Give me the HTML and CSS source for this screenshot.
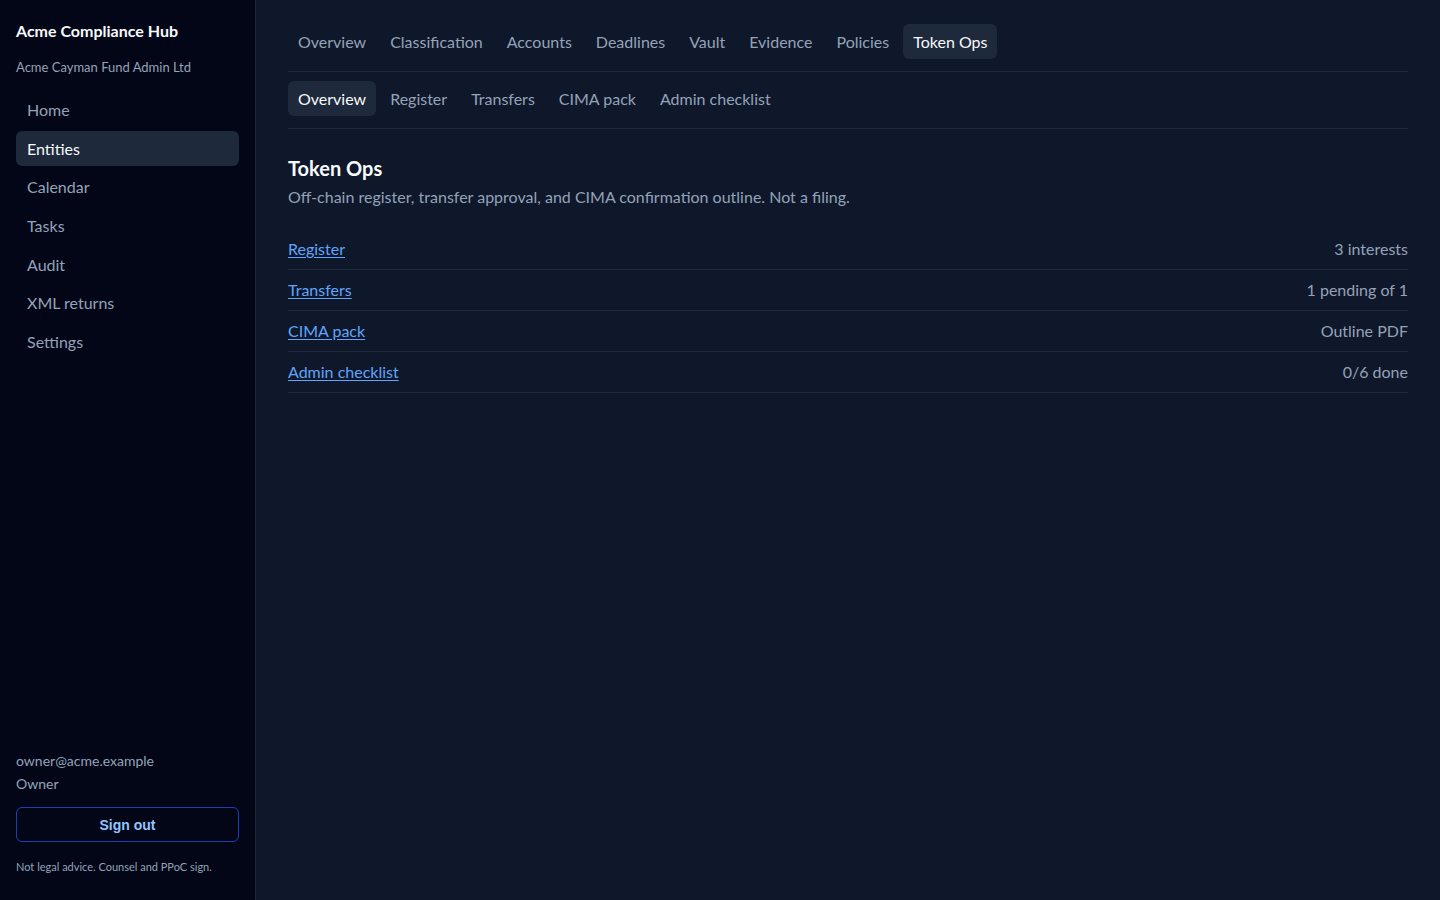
FILE: index.html
```html
<!DOCTYPE html>
<html lang="en">
<head>
<meta charset="utf-8">
<title>Token Ops · Acme Compliance Hub</title>
<link rel="stylesheet" href="styles.css">
</head>
<body>
<div class="app">
  <aside class="sidebar">
    <div class="brand">
      <div class="brand-title">Acme Compliance Hub</div>
      <div class="brand-org">Acme Cayman Fund Admin Ltd</div>
    </div>
    <nav class="side-nav">
      <a class="side-link" href="#">Home</a>
      <a class="side-link active" href="#">Entities</a>
      <a class="side-link" href="#">Calendar</a>
      <a class="side-link" href="#">Tasks</a>
      <a class="side-link" href="#">Audit</a>
      <a class="side-link" href="#">XML returns</a>
      <a class="side-link" href="#">Settings</a>
    </nav>
    <div class="side-footer">
      <div class="user-email">owner@acme.example</div>
      <div class="user-role">Owner</div>
      <button class="signout" type="button">Sign out</button>
      <div class="disclaimer">Not legal advice. Counsel and PPoC sign.</div>
    </div>
  </aside>
  <main class="main">
    <nav class="tabs">
      <a class="tab" href="#">Overview</a>
      <a class="tab" href="#">Classification</a>
      <a class="tab" href="#">Accounts</a>
      <a class="tab" href="#">Deadlines</a>
      <a class="tab" href="#">Vault</a>
      <a class="tab" href="#">Evidence</a>
      <a class="tab" href="#">Policies</a>
      <a class="tab active" href="#">Token Ops</a>
    </nav>
    <nav class="tabs sub">
      <a class="tab active" href="#">Overview</a>
      <a class="tab" href="#">Register</a>
      <a class="tab" href="#">Transfers</a>
      <a class="tab" href="#">CIMA pack</a>
      <a class="tab" href="#">Admin checklist</a>
    </nav>
    <section class="content">
      <h1 class="page-title">Token Ops</h1>
      <p class="page-desc">Off-chain register, transfer approval, and CIMA confirmation outline. Not a filing.</p>
      <ul class="summary">
        <li class="row"><a href="#">Register</a><span class="meta">3 interests</span></li>
        <li class="row"><a href="#">Transfers</a><span class="meta">1 pending of 1</span></li>
        <li class="row"><a href="#">CIMA pack</a><span class="meta">Outline PDF</span></li>
        <li class="row"><a href="#">Admin checklist</a><span class="meta">0/6 done</span></li>
      </ul>
    </section>
  </main>
</div>
</body>
</html>
```
FILE: styles.css
```css
* { box-sizing: border-box; }
html, body { margin: 0; padding: 0; height: 100%; }
body {
  background: #0f172a;
  color: #e2e8f0;
  font-family: Lato, "Noto Sans", "Liberation Sans", sans-serif;
  font-size: 16px;
}
a { text-decoration: none; color: inherit; }

.app { display: flex; min-height: 100vh; }

.sidebar {
  width: 256px;
  flex: 0 0 256px;
  background: #020617;
  border-right: 1px solid #1e293b;
  padding: 20px 16px 25px;
  display: flex;
  flex-direction: column;
  height: 100vh;
}
.brand-title {
  font-weight: 700;
  font-size: 16px;
  line-height: 22px;
  color: #f8fafc;
}
.brand-org {
  margin-top: 16px;
  font-size: 13px;
  line-height: 18px;
  color: #94a3b8;
}
.side-nav {
  margin-top: 16px;
  display: flex;
  flex-direction: column;
  gap: 3.7px;
}
.side-link {
  display: block;
  padding: 6px 11px;
  line-height: 23px;
  border-radius: 6px;
  color: #94a3b8;
  font-size: 16px;
}
.side-link.active { background: #1e293b; color: #f8fafc; }

.side-footer { margin-top: auto; }
.user-email { font-size: 14px; line-height: 23px; color: #94a3b8; }
.user-role { font-size: 14px; line-height: 23px; color: #94a3b8; }
.signout {
  display: block;
  width: 100%;
  margin-top: 12px;
  height: 35px;
  background: transparent;
  border: 1px solid #1e40af;
  border-radius: 6px;
  color: #93c5fd;
  font-family: "Liberation Sans", Arial, sans-serif;
  font-weight: 700;
  font-size: 14px;
}
.disclaimer {
  margin-top: 17px;
  font-size: 11px;
  line-height: 16px;
  color: #94a3b8;
}

.main {
  flex: 1;
  padding: 24px 32px 32px;
  min-width: 0;
}
.tabs {
  display: flex;
  gap: 4px;
  padding-bottom: 12px;
  border-bottom: 1px solid #1e293b;
}
.tabs.sub { margin-top: 9px; }
.tab {
  display: block;
  padding: 6px 10px;
  line-height: 23px;
  border-radius: 6px;
  color: #94a3b8;
  font-size: 16px;
}
.tab.active { background: #1e293b; color: #f8fafc; }

.content { padding-top: 26px; }
.page-title {
  margin: 0;
  font-size: 20px;
  line-height: 26px;
  font-weight: 700;
  color: #f8fafc;
}
.page-desc {
  margin: 5px 0 0;
  font-size: 16px;
  line-height: 22px;
  color: #94a3b8;
}
.summary {
  list-style: none;
  margin: 21px 0 0;
  padding: 0;
}
.row {
  display: flex;
  justify-content: space-between;
  align-items: center;
  padding: 10px 0;
  line-height: 20px;
  border-bottom: 1px solid #1e293b;
}
.row a { color: #60a5fa; text-decoration: underline; text-underline-offset: 2px; }
.meta { color: #94a3b8; }
```
